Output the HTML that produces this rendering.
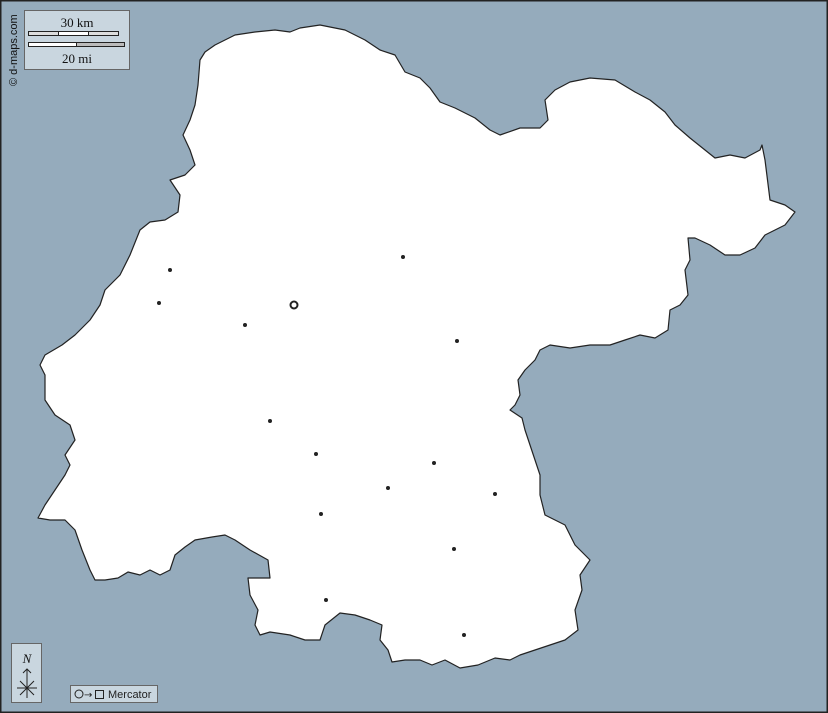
<!DOCTYPE html>
<html><head><meta charset="utf-8"><style>
html,body{margin:0;padding:0;}
body{width:828px;height:713px;overflow:hidden;background:#95abbc;font-family:"Liberation Serif",serif;}
</style></head><body>
<svg width="828" height="713" viewBox="0 0 828 713" xmlns="http://www.w3.org/2000/svg" style="position:absolute;left:0;top:0">
<rect x="0" y="0" width="828" height="713" fill="#95abbc"/>
<polygon fill="#fff" stroke="#222" stroke-width="1.2" stroke-linejoin="round" points="205,52 215,45 235,35 255,32 275,30 290,32 300,28 320,25 345,30 365,40 380,50 395,55 405,72 420,78 430,88 440,102 455,108 475,118 490,130 500,135 520,128 540,128 548,120 545,100 555,90 570,82 590,78 615,80 635,92 650,100 665,112 675,125 690,138 705,150 715,158 730,155 745,158 760,150 762,145 765,160 770,200 785,205 795,212 785,225 775,230 765,235 755,248 740,255 725,255 710,245 695,238 688,238 690,260 685,270 688,295 680,305 670,310 668,330 655,338 640,335 625,340 610,345 590,345 570,348 550,345 540,350 535,360 525,370 518,380 520,395 515,405 510,410 522,418 525,430 530,445 535,460 540,475 540,495 545,515 555,520 565,525 575,545 590,560 580,575 582,590 575,610 578,630 565,640 550,645 535,650 520,655 510,660 495,658 478,665 460,668 445,660 432,665 420,660 405,660 392,662 388,650 380,640 382,625 370,620 355,615 340,613 325,625 320,640 305,640 290,635 270,632 260,635 255,625 258,610 250,595 248,578 270,578 268,560 250,550 235,540 225,535 212,537 195,540 185,547 175,555 170,570 160,575 150,570 140,575 128,572 118,578 105,580 95,580 90,570 82,550 75,530 65,520 50,520 38,518 45,505 55,490 65,475 70,465 65,455 75,440 70,425 55,415 45,400 45,375 40,365 45,355 62,345 75,335 90,320 100,305 105,290 120,275 130,255 140,230 150,222 165,220 178,212 180,195 170,180 185,175 195,165 190,150 183,135 190,120 195,105 198,85 200,60"/>
<g fill="#222">
<circle cx="170" cy="270" r="2"/><circle cx="159" cy="303" r="2"/><circle cx="245" cy="325" r="2"/><circle cx="403" cy="257" r="2"/><circle cx="457" cy="341" r="2"/><circle cx="270" cy="421" r="2"/><circle cx="316" cy="454" r="2"/><circle cx="434" cy="463" r="2"/><circle cx="388" cy="488" r="2"/><circle cx="495" cy="494" r="2"/><circle cx="321" cy="514" r="2"/><circle cx="454" cy="549" r="2"/><circle cx="326" cy="600" r="2"/><circle cx="464" cy="635" r="2"/>
</g>
<circle cx="294" cy="305" r="3.5" fill="none" stroke="#222" stroke-width="2"/>
<rect x="24.5" y="10.5" width="105" height="59" fill="#c9d6df" stroke="#666"/>
<text x="77" y="27" font-size="13" text-anchor="middle" fill="#111">30 km</text>
<rect x="28.5" y="31.5" width="90" height="4" fill="#ddd" stroke="#222"/>
<rect x="58.5" y="31.5" width="30" height="4" fill="#fff" stroke="#222"/>
<rect x="28.5" y="42.5" width="96" height="4" fill="#fff" stroke="#222"/>
<rect x="76.5" y="42.5" width="48" height="4" fill="#bbb" stroke="#222"/>
<text x="77" y="63" font-size="13" text-anchor="middle" fill="#111">20 mi</text>
<text transform="translate(17,86) rotate(-90)" font-family="Liberation Sans,sans-serif" font-size="11" fill="#111">© d-maps.com</text>
<rect x="11.5" y="643.5" width="30" height="59" fill="#c9d6df" stroke="#666"/>
<text x="27" y="663" font-size="13" font-style="italic" text-anchor="middle" fill="#111">N</text>
<path d="M27 669 V698 M23 673 L27 669 L31 673 M17 688 H37 M20 681 L34 695 M34 681 L20 695" stroke="#222" stroke-width="1" fill="none"/>
<rect x="70.5" y="685.5" width="87" height="17" fill="#c9d6df" stroke="#666"/>
<circle cx="79" cy="694" r="4" fill="none" stroke="#222"/>
<text x="84" y="698" font-family="DejaVu Sans,sans-serif" font-size="10" fill="#222">→</text>
<rect x="95.5" y="690.5" width="8" height="8" fill="none" stroke="#222"/>
<text x="108" y="698" font-family="Liberation Sans,sans-serif" font-size="11" fill="#222">Mercator</text>
<rect x="0.5" y="0.5" width="827" height="712" fill="none" stroke="#222" stroke-width="2"/>
</svg>
</body></html>
